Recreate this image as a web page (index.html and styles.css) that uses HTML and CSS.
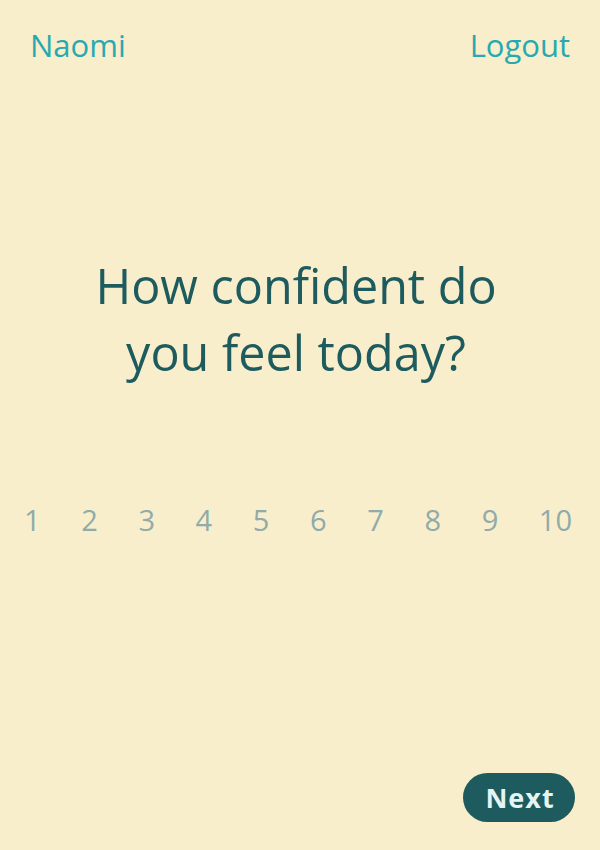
FILE: index.html
```html
<!DOCTYPE html>
<html lang="en">
<head>
<meta charset="utf-8">
<link rel="stylesheet" href="styles.css">
</head>
<body>
<div class="app">
  <header class="top">
    <a class="link">Naomi</a>
    <a class="link">Logout</a>
  </header>
  <main class="main">
    <h1 class="question">How confident do<br>you feel today?</h1>
    <div class="scale">
      <span>1</span><span>2</span><span>3</span><span>4</span><span>5</span><span>6</span><span>7</span><span>8</span><span>9</span><span>10</span>
    </div>
  </main>
  <footer class="bottom">
    <button class="next">Next</button>
  </footer>
</div>
</body>
</html>
```
FILE: styles.css
```css
html, body {
  margin: 0;
  padding: 0;
  background: #f9eecb;
}
.app {
  width: 600px;
  height: 850px;
  display: flex;
  flex-direction: column;
  font-family: "Open Sans", "DejaVu Sans", sans-serif;
}
.top {
  display: flex;
  justify-content: space-between;
  padding: 24px 30px 0 30px;
}
.link {
  color: #26aab0;
  font-size: 31px;
  line-height: 42px;
}
.main {
  flex: 1;
  display: flex;
  flex-direction: column;
  align-items: center;
}
.question {
  margin: 186px 8px 0 0;
  text-align: center;
  font-weight: normal;
  color: #1d5b5e;
  font-size: 48.5px;
  line-height: 67px;
}
.scale {
  margin: 114px 0 0 -4px;
  width: 548px;
  display: flex;
  justify-content: space-between;
  color: #8fabaa;
  font-size: 29px;
  line-height: 40px;
}
.bottom {
  display: flex;
  justify-content: flex-end;
  padding: 0 25px 28px 0;
}
.next {
  background: #1d5b5e;
  color: #e3f4f3;
  border: none;
  border-radius: 25px;
  width: 112px;
  height: 49px;
  font-family: "Open Sans", sans-serif;
  font-weight: bold;
  font-size: 27px;
  letter-spacing: 1px;
  padding: 0 0 0 2px;
}
```
